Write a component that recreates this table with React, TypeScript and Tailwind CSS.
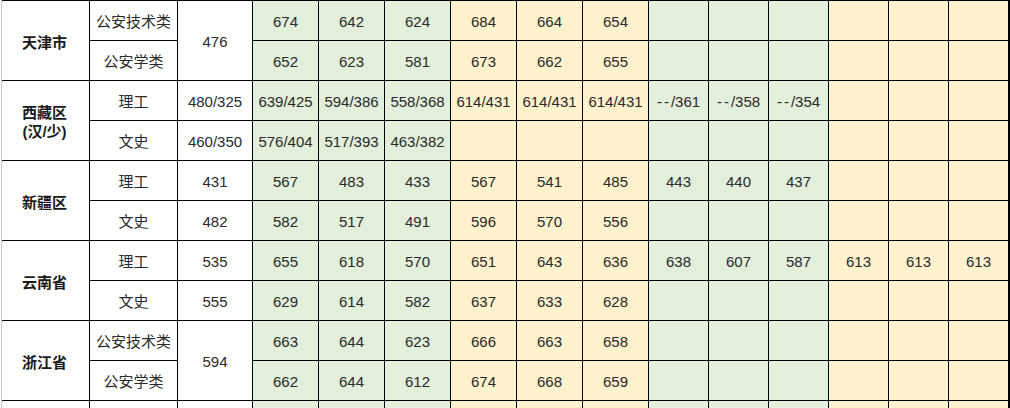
import { Fragment } from 'react';

type Row = {
  prov?: string;
  provSub?: string;
  type: string;
  score?: string;
  span?: boolean;
  vals: string[];
};

const rows: Row[] = [
  { prov: '天津市', type: '公安技术类', score: '476', span: true, vals: ['674', '642', '624', '684', '664', '654'] },
  { type: '公安学类', vals: ['652', '623', '581', '673', '662', '655'] },
  {
    prov: '西藏区',
    provSub: '(汉/少)',
    type: '理工',
    score: '480/325',
    vals: ['639/425', '594/386', '558/368', '614/431', '614/431', '614/431', '--/361', '--/358', '--/354'],
  },
  { type: '文史', score: '460/350', vals: ['576/404', '517/393', '463/382'] },
  { prov: '新疆区', type: '理工', score: '431', vals: ['567', '483', '433', '567', '541', '485', '443', '440', '437'] },
  { type: '文史', score: '482', vals: ['582', '517', '491', '596', '570', '556'] },
  {
    prov: '云南省',
    type: '理工',
    score: '535',
    vals: ['655', '618', '570', '651', '643', '636', '638', '607', '587', '613', '613', '613'],
  },
  { type: '文史', score: '555', vals: ['629', '614', '582', '637', '633', '628'] },
  { prov: '浙江省', type: '公安技术类', score: '594', span: true, vals: ['663', '644', '623', '666', '663', '658'] },
  { type: '公安学类', vals: ['662', '644', '612', '674', '668', '659'] },
];

// 12 score columns: green x3, yellow x3, green x3, yellow x3
const colBg = (i: number) => (Math.floor(i / 3) % 2 === 0 ? 'bg-[#e2efda]' : 'bg-[#fff2cc]');

function Value({ v }: { v: string }) {
  if (v.startsWith('--')) {
    return (
      <span>
        <span className="tracking-[2px]">--</span>
        {v.slice(2)}
      </span>
    );
  }
  return <span>{v}</span>;
}

function ScoreCells({ vals }: { vals: string[] }) {
  return (
    <>
      {Array.from({ length: 12 }).map((_, i) => (
        <div key={i} className={`${colBg(i)} flex items-center justify-center pt-[3px]`}>
          {vals[i] ? <Value v={vals[i]} /> : null}
        </div>
      ))}
    </>
  );
}

export default function App() {
  return (
    <div className="w-[1010px] h-[408px] overflow-hidden bg-white pl-px">
      <div
        className="border-l border-[#c6c6c6] bg-black pt-px pr-px grid gap-px grid-cols-[87px_87px_74px_repeat(6,65px)_repeat(6,59px)] auto-rows-[39px] text-[15px] text-[#2a2a2a]"
        style={{ fontFamily: '"Liberation Sans", "Noto Sans CJK SC", sans-serif' }}
      >
        {rows.map((r, idx) => (
          <Fragment key={idx}>
            {r.prov && (
              <div className="row-span-2 bg-white flex flex-col items-center justify-center font-bold leading-[19px] pr-[2px] pt-[3px] text-[#1a1a1a]">
                <span>{r.prov}</span>
                {r.provSub && <span>{r.provSub}</span>}
              </div>
            )}
            <div className="bg-white flex items-center justify-center pt-[3px]">{r.type}</div>
            {r.score && (
              <div className={`${r.span ? 'row-span-2' : ''} bg-white flex items-center justify-center pt-[3px]`}>
                {r.score}
              </div>
            )}
            <ScoreCells vals={r.vals} />
          </Fragment>
        ))}
        {/* partial next row */}
        <div className="bg-white" />
        <div className="bg-white" />
        <div className="bg-white" />
        <ScoreCells vals={[]} />
      </div>
    </div>
  );
}
